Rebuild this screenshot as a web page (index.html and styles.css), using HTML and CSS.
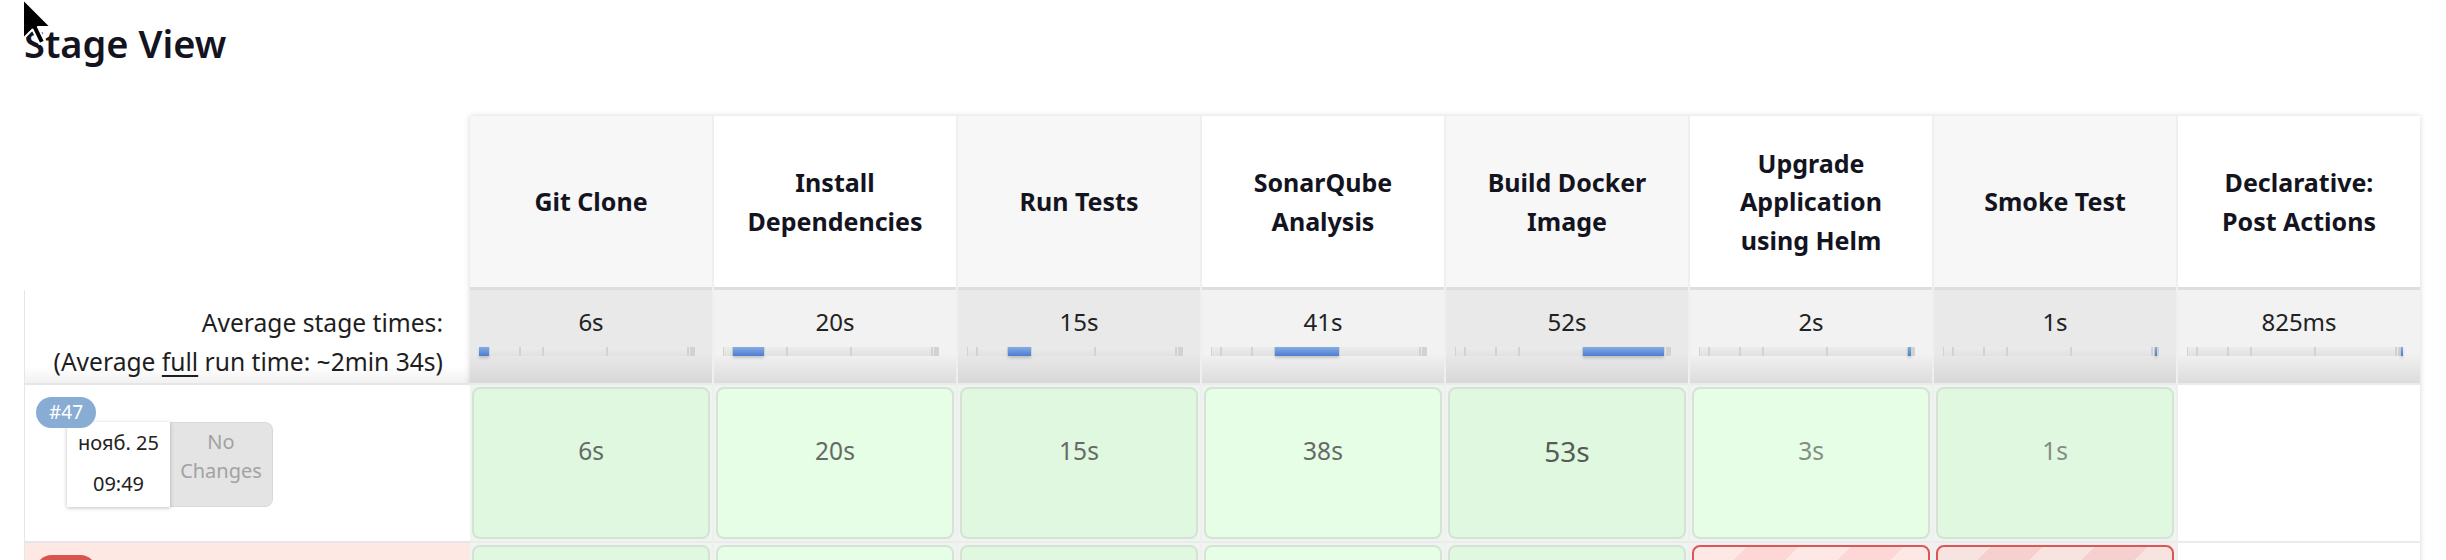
FILE: index.html
```html
<!DOCTYPE html>
<html lang="ru">
<head>
<meta charset="utf-8">
<title>Stage View</title>
<link rel="stylesheet" href="styles.css">
</head>
<body>
<svg class="cursor" width="34" height="50" viewBox="0 0 34 50" aria-hidden="true">
  <path d="M1 1 L1 41 L10.5 31.5 L17.5 46 L23 43.5 L16 29 L29 29 Z" fill="#000" stroke="#fff" stroke-width="2" stroke-linejoin="round"/>
</svg>

<h2 class="title">Stage View</h2>

<div class="stage-view">
  <div class="left">
    <div class="left-head"></div>
    <div class="left-avg">
      <div>Average stage times:</div>
      <div>(Average <u>full</u> run time: ~2min 34s)</div>
    </div>
    <div class="left-build">
      <span class="badge">#47</span>
      <div class="build-info">
        <div class="date"><div>нояб. 25</div><div class="time">09:49</div></div>
        <div class="changes">No<br>Changes</div>
      </div>
    </div>
    <div class="left-build failed">
      <span class="badge badge-failed">#46</span>
      <div class="build-info">
        <div class="date"><div>нояб. 25</div><div class="time">09:41</div></div>
        <div class="changes">No<br>Changes</div>
      </div>
    </div>
  </div>

  <div class="stages">
    <div class="head">Git Clone</div>
    <div class="head even">Install Dependencies</div>
    <div class="head">Run Tests</div>
    <div class="head even">SonarQube Analysis</div>
    <div class="head">Build Docker Image</div>
    <div class="head even">Upgrade<br>Application<br>using Helm</div>
    <div class="head">Smoke Test</div>
    <div class="head even">Declarative:<br>Post Actions</div>

    <div class="avg"><div>6s</div><div class="bar"><span class="seg on" style="width:10px"></span><span class="seg" style="width:31px"></span><span class="seg" style="width:23px"></span><span class="seg" style="width:64px"></span><span class="seg" style="width:81px"></span><span class="seg" style="width:3px"></span><span class="seg" style="width:2px"></span><span class="seg" style="width:2px"></span></div></div>
    <div class="avg even"><div>20s</div><div class="bar"><span class="seg" style="width:10px"></span><span class="seg on" style="width:31px"></span><span class="seg" style="width:23px"></span><span class="seg" style="width:64px"></span><span class="seg" style="width:81px"></span><span class="seg" style="width:3px"></span><span class="seg" style="width:2px"></span><span class="seg" style="width:2px"></span></div></div>
    <div class="avg"><div>15s</div><div class="bar"><span class="seg" style="width:10px"></span><span class="seg" style="width:31px"></span><span class="seg on" style="width:23px"></span><span class="seg" style="width:64px"></span><span class="seg" style="width:81px"></span><span class="seg" style="width:3px"></span><span class="seg" style="width:2px"></span><span class="seg" style="width:2px"></span></div></div>
    <div class="avg even"><div>41s</div><div class="bar"><span class="seg" style="width:10px"></span><span class="seg" style="width:31px"></span><span class="seg" style="width:23px"></span><span class="seg on" style="width:64px"></span><span class="seg" style="width:81px"></span><span class="seg" style="width:3px"></span><span class="seg" style="width:2px"></span><span class="seg" style="width:2px"></span></div></div>
    <div class="avg"><div>52s</div><div class="bar"><span class="seg" style="width:10px"></span><span class="seg" style="width:31px"></span><span class="seg" style="width:23px"></span><span class="seg" style="width:64px"></span><span class="seg on" style="width:81px"></span><span class="seg" style="width:3px"></span><span class="seg" style="width:2px"></span><span class="seg" style="width:2px"></span></div></div>
    <div class="avg even"><div>2s</div><div class="bar"><span class="seg" style="width:10px"></span><span class="seg" style="width:31px"></span><span class="seg" style="width:23px"></span><span class="seg" style="width:64px"></span><span class="seg" style="width:81px"></span><span class="seg on" style="width:3px"></span><span class="seg" style="width:2px"></span><span class="seg" style="width:2px"></span></div></div>
    <div class="avg"><div>1s</div><div class="bar"><span class="seg" style="width:10px"></span><span class="seg" style="width:31px"></span><span class="seg" style="width:23px"></span><span class="seg" style="width:64px"></span><span class="seg" style="width:81px"></span><span class="seg" style="width:3px"></span><span class="seg on" style="width:2px"></span><span class="seg" style="width:2px"></span></div></div>
    <div class="avg even"><div>825ms</div><div class="bar"><span class="seg" style="width:10px"></span><span class="seg" style="width:31px"></span><span class="seg" style="width:23px"></span><span class="seg" style="width:64px"></span><span class="seg" style="width:81px"></span><span class="seg" style="width:3px"></span><span class="seg" style="width:2px"></span><span class="seg on" style="width:2px"></span></div></div>

    <div class="wrap"><div class="cell">6s</div></div>
    <div class="wrap"><div class="cell even">20s</div></div>
    <div class="wrap"><div class="cell">15s</div></div>
    <div class="wrap"><div class="cell even">38s</div></div>
    <div class="wrap"><div class="cell big">53s</div></div>
    <div class="wrap"><div class="cell even faint">3s</div></div>
    <div class="wrap"><div class="cell faint">1s</div></div>
    <div class="wrap empty"></div>

    <div class="wrap"><div class="cell">5s</div></div>
    <div class="wrap"><div class="cell even">19s</div></div>
    <div class="wrap"><div class="cell">14s</div></div>
    <div class="wrap"><div class="cell even">43s</div></div>
    <div class="wrap"><div class="cell">51s</div></div>
    <div class="wrap wrap-failed"><div class="cell failed even">2s</div></div>
    <div class="wrap wrap-failed"><div class="cell failed">1s</div></div>
    <div class="wrap empty"></div>
  </div>
</div>
</body>
</html>
```

FILE: styles.css
```css
html, body {
  margin: 0;
  padding: 0;
  background: #ffffff;
}

body {
  font-family: "Noto Sans", "Open Sans", sans-serif;
  color: #14141f;
  overflow: hidden;
  position: relative;
}

.cursor {
  position: absolute;
  left: 22px;
  top: -2px;
  z-index: 10;
}

.title {
  margin: 21px 0 0 24px;
  font-size: 38px;
  font-weight: 600;
  line-height: 45px;
}

.stage-view {
  display: flex;
  align-items: flex-start;
  margin: 50px 0 0 24px;
}

/* left column */
.left {
  width: 446px;
  flex: none;
}

.left-head {
  height: 174px;
}

.left-avg {
  height: 93px;
  box-sizing: border-box;
  border-left: 1px solid #e6e6e6;
  padding: 13px 27px 0 0;
  text-align: right;
  font-size: 24.6px;
  line-height: 39px;
  color: #1e1e1e;
  background: linear-gradient(#ffffff 82%, #f1f1f1);
}

.left-avg u {
  text-underline-offset: 4px;
}

.left-build {
  position: relative;
  height: 156px;
  border-top: 2px solid #e6e6e6;
  border-left: 1px solid #e6e6e6;
  background: #ffffff;
}

.left-build.failed {
  background: #fde8e4;
}

.badge {
  position: absolute;
  left: 11px;
  top: 12px;
  z-index: 2;
  width: 60px;
  height: 31px;
  border-radius: 16px;
  background: #88acd4;
  color: #ffffff;
  font-size: 19px;
  line-height: 31px;
  text-align: center;
}

.badge-failed {
  background: #d9534f;
}

.build-info {
  display: flex;
  padding: 37px 0 0 42px;
}

.date {
  position: relative;
  z-index: 1;
  width: 103px;
  height: 85px;
  box-sizing: border-box;
  padding-top: 6px;
  background: #ffffff;
  box-shadow: 0 1px 4px rgba(0, 0, 0, 0.25);
  text-align: center;
  font-size: 20px;
  line-height: 29px;
  color: #222222;
}

.date .time {
  margin-top: 12px;
}

.changes {
  width: 103px;
  height: 85px;
  box-sizing: border-box;
  padding-top: 4px;
  background: #e4e4e4;
  border: 1px solid #d9d9d9;
  border-left: 0;
  border-radius: 0 8px 8px 0;
  text-align: center;
  font-size: 20px;
  line-height: 29px;
  color: #a2a2a2;
}

/* stage grid */
.stages {
  display: grid;
  grid-template-columns: repeat(8, 242px);
  column-gap: 2px;
  background: #efefef;
  box-shadow: 0 0 6px rgba(0, 0, 0, 0.16);
}

.head {
  height: 171px;
  box-sizing: border-box;
  padding: 0 18px;
  display: flex;
  align-items: center;
  justify-content: center;
  text-align: center;
  font-size: 25px;
  font-weight: 700;
  line-height: 38.5px;
  background: #f7f7f7;
  color: #14141f;
}

.head.even {
  background: #ffffff;
}

.avg {
  height: 96px;
  box-sizing: border-box;
  border-top: 3px solid #dedede;
  padding-top: 13px;
  text-align: center;
  font-size: 24px;
  line-height: 38px;
  color: #222222;
  background: linear-gradient(#e9e9e9 0%, #e9e9e9 68%, #d8d8d8 100%);
}

.avg.even {
  background: linear-gradient(#f2f2f2 0%, #f2f2f2 68%, #dcdcdc 100%);
}

.bar {
  display: flex;
  width: 216px;
  height: 9px;
  margin: 6px 0 0 9px;
  background: #dddddd;
}

.seg {
  display: block;
  height: 100%;
  box-sizing: border-box;
  background: linear-gradient(#ececec, #e1e1e1);
  box-shadow: inset 1px 0 0 #d2d2d2, inset -1px 0 0 #d2d2d2;
}

.seg.on {
  background: linear-gradient(#86ace6, #4c7dd0);
  box-shadow: 0 2px 3px rgba(0, 0, 0, 0.18);
}

.wrap {
  height: 158px;
  box-sizing: border-box;
  border-top: 2px solid #ebebeb;
  padding: 2px;
  background: #eef5ee;
}

.wrap.empty {
  background: #ffffff;
}

.wrap.wrap-failed {
  background: #f5f0f0;
}

.cell {
  height: 152px;
  box-sizing: border-box;
  padding-top: 43px;
  border: 2px solid #d6e2d6;
  border-radius: 8px;
  background: #dff8df;
  text-align: center;
  font-size: 24.5px;
  line-height: 38px;
  color: #666a66;
}

.cell.even {
  background: #e5fee5;
}

.cell.big {
  font-size: 28px;
  color: #555b55;
}

.cell.faint {
  color: #858d85;
}

.cell.failed {
  border-color: #dc5753;
  background: repeating-linear-gradient(135deg, #f7e4e0 0 37px, #f6cfcf 37px 74px);
}

.cell.failed.even {
  background: repeating-linear-gradient(135deg, #fee8e5 0 37px, #fdd6d6 37px 74px);
}
```
